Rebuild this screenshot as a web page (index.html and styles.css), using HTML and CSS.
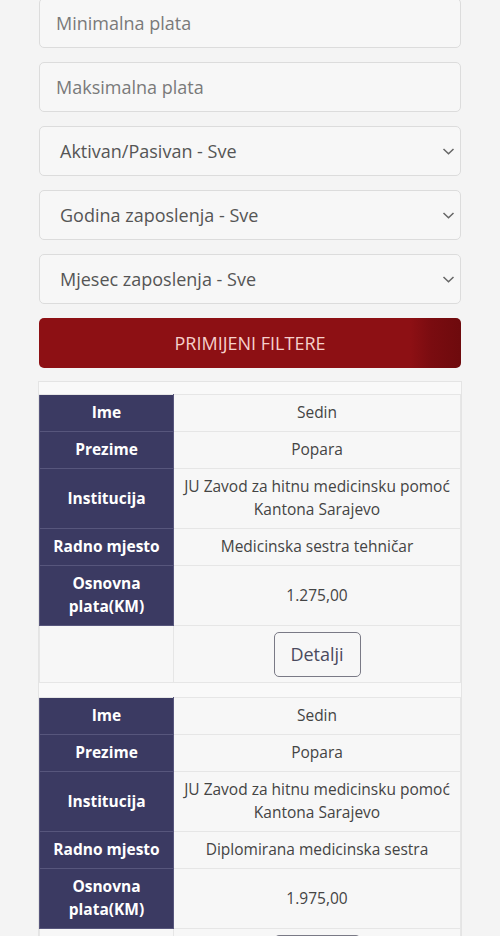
FILE: index.html
```html
<!DOCTYPE html>
<html lang="bs">
<head>
<meta charset="utf-8">
<title>Plate</title>
<link rel="stylesheet" href="styles.css">
</head>
<body>
<div class="wrap">
  <div class="field input">Minimalna plata</div>
  <div class="field input">Maksimalna plata</div>
  <div class="field select"><span>Aktivan/Pasivan - Sve</span><svg class="chev" viewBox="0 0 13 7" width="13" height="7"><path d="M1.5 1 6.5 5.8 11.5 1" fill="none" stroke="#666" stroke-width="1.5"/></svg></div>
  <div class="field select"><span>Godina zaposlenja - Sve</span><svg class="chev" viewBox="0 0 13 7" width="13" height="7"><path d="M1.5 1 6.5 5.8 11.5 1" fill="none" stroke="#666" stroke-width="1.5"/></svg></div>
  <div class="field select"><span>Mjesec zaposlenja - Sve</span><svg class="chev" viewBox="0 0 13 7" width="13" height="7"><path d="M1.5 1 6.5 5.8 11.5 1" fill="none" stroke="#666" stroke-width="1.5"/></svg></div>
  <div class="apply">PRIMIJENI FILTERE</div>

  <div class="card">
    <table class="rec">
      <tr><th>Ime</th><td>Sedin</td></tr>
      <tr><th>Prezime</th><td>Popara</td></tr>
      <tr><th>Institucija</th><td>JU Zavod za hitnu medicinsku pomoć Kantona Sarajevo</td></tr>
      <tr><th>Radno mjesto</th><td>Medicinska sestra tehničar</td></tr>
      <tr><th>Osnovna plata(KM)</th><td>1.275,00</td></tr>
      <tr class="act"><td></td><td><span class="det">Detalji</span></td></tr>
    </table>
    <table class="rec">
      <tr><th>Ime</th><td>Sedin</td></tr>
      <tr><th>Prezime</th><td>Popara</td></tr>
      <tr><th>Institucija</th><td>JU Zavod za hitnu medicinsku pomoć Kantona Sarajevo</td></tr>
      <tr><th>Radno mjesto</th><td>Diplomirana medicinska sestra</td></tr>
      <tr><th>Osnovna plata(KM)</th><td>1.975,00</td></tr>
      <tr class="act"><td></td><td><span class="det">Detalji</span></td></tr>
    </table>
  </div>
</div>
</body>
</html>
```
FILE: styles.css
```css
html, body {
  margin: 0;
  padding: 0;
  background: #f4f4f4;
  font-family: "Open Sans", "Noto Sans", sans-serif;
}
.wrap {
  padding: 0 39px;
  margin-top: -2px;
}
.field {
  box-sizing: border-box;
  height: 50px;
  margin-bottom: 14px;
  border: 1px solid #dcdcdc;
  border-radius: 5px;
  background: #f7f7f7;
  display: flex;
  align-items: center;
  font-size: 18px;
}
.input {
  padding-left: 16px;
  color: #7a7a7a;
}
.select {
  padding: 0 5px 0 20px;
  color: #555;
  justify-content: space-between;
}
.chev {
  display: block;
  margin-top: 1px;
}
.apply {
  box-sizing: border-box;
  height: 50px;
  border-radius: 5px;
  background: linear-gradient(to right, #8d1014 0%, #8d1014 88%, #7a0c10 93%, #6e0a0d 100%);
  color: #f6d0cc;
  font-size: 18px;
  display: flex;
  align-items: center;
  justify-content: center;
  margin-bottom: 13px;
}
.card {
  border: 1px solid #e4e4e4;
  background: #f9f9f9;
  padding-top: 12px;
  margin: 0 -1px;
}
.rec {
  width: 100%;
  border-collapse: collapse;
  margin-bottom: 14px;
  font-size: 15.5px;
  line-height: 23px;
}
.rec th, .rec td {
  border: 1px solid #e6e6e6;
  padding: 6px 6px 7px;
  text-align: center;
}
.rec th {
  width: 121px;
  background: #3b3a62;
  color: #fff;
  font-weight: 700;
  border-color: #57567c;
}
.rec td {
  background: #f7f7f7;
  color: #444;
}
.rec tr:first-child td, .rec tr:first-child th {
  border-top: 1px solid #e6e6e6;
}
.act td {
  padding: 6px 6px 5px;
}
.det {
  display: inline-block;
  vertical-align: top;
  box-sizing: border-box;
  width: 87px;
  height: 45px;
  line-height: 43px;
  border: 1px solid #7a7a86;
  border-radius: 5px;
  color: #4a4a5e;
  font-size: 18px;
}
```
